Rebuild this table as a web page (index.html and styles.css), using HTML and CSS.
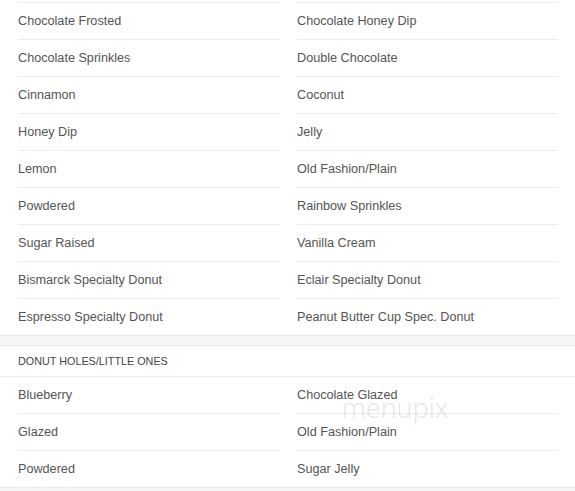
FILE: index.html
```html
<!DOCTYPE html>
<html>
<head>
<meta charset="utf-8">
<link rel="stylesheet" href="styles.css">
</head>
<body>
<div class="page">
  <section class="card first">
    <ul class="grid">
      <li>Chocolate Frosted</li><li>Chocolate Honey Dip</li>
      <li>Chocolate Sprinkles</li><li>Double Chocolate</li>
      <li>Cinnamon</li><li>Coconut</li>
      <li>Honey Dip</li><li>Jelly</li>
      <li>Lemon</li><li>Old Fashion/Plain</li>
      <li>Powdered</li><li>Rainbow Sprinkles</li>
      <li>Sugar Raised</li><li>Vanilla Cream</li>
      <li>Bismarck Specialty Donut</li><li>Eclair Specialty Donut</li>
      <li>Espresso Specialty Donut</li><li>Peanut Butter Cup Spec. Donut</li>
    </ul>
  </section>
  <section class="card">
    <h3 class="heading">DONUT HOLES/LITTLE ONES</h3>
    <ul class="grid">
      <li>Blueberry</li><li>Chocolate Glazed</li>
      <li>Glazed</li><li>Old Fashion/Plain</li>
      <li>Powdered</li><li>Sugar Jelly</li>
    </ul>
    <div class="watermark">menupix</div>
  </section>
</div>
</body>
</html>
```
FILE: styles.css
```css
html, body {
  margin: 0;
  padding: 0;
  background: #f5f5f5;
}
.page {
  width: 575px;
  font-family: "Liberation Sans", Arial, sans-serif;
  color: #555;
}
.card {
  position: relative;
  background: #fff;
  border-top: 1px solid #ebebeb;
  border-bottom: 1px solid #ebebeb;
  margin-bottom: 9px;
}
.card.first {
  border-top: none;
  padding-top: 2px;
}
.grid {
  list-style: none;
  margin: 0;
  padding: 0 17px 0 18px;
  display: grid;
  grid-template-columns: 262px 261px;
  column-gap: 17px;
}
.grid li {
  height: 36px;
  line-height: 36px;
  border-top: 1px solid #eee;
  font-size: 12.65px;
  white-space: nowrap;
}
.card .heading + .grid li:nth-child(1),
.card .heading + .grid li:nth-child(2) {
  border-top: none;
}
.heading {
  margin: 0;
  padding: 0 18px;
  height: 30px;
  line-height: 30px;
  font-size: 10.8px;
  font-weight: normal;
  color: #444;
  border-bottom: 1px solid #eee;
}
.watermark {
  position: absolute;
  left: 342px;
  top: 43px;
  font-family: "Open Sans", sans-serif;
  font-weight: 300;
  font-size: 27px;
  color: rgba(180, 180, 180, 0.35);
  pointer-events: none;
}
```
